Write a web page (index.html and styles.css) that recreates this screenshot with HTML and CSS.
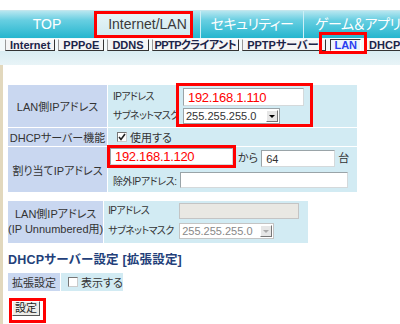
FILE: index.html
```html
<!DOCTYPE html>
<html lang="ja">
<head>
    <meta charset="UTF-8">
    <meta name="viewport" content="width=device-width, initial-scale=1.0">
    <title>LAN設定</title>
    <link rel="stylesheet" href="styles.css">
</head>
<body>
<div class="gap"></div>
<ul class="tabs">
    <li class="tab t-top">TOP</li>
    <li class="tab cur">Internet/LAN</li>
    <li class="tab t-sec">セキュリティー</li>
    <li class="tab t-game">ゲーム＆アプリ</li>
</ul>
<div class="subtabs">
    <span class="sb">Internet</span>
    <span class="sb">PPPoE</span>
    <span class="sb">DDNS</span>
    <span class="sb sb-cl">PPTPクライアント</span>
    <span class="sb sb-sv">PPTPサーバー</span>
    <span class="sb on">LAN</span>
    <span class="sb">DHCP</span>
</div>
<div class="band"></div>
<div class="main">
    <table class="ftab t1">
        <tr class="r1">
            <th>LAN側IPアドレス</th>
            <td>
                <div class="pair">
                    <div class="lbls">
                        <span class="l-ip">IPアドレス</span>
                        <span class="l-mask">サブネットマスク</span>
                    </div>
                    <div class="mark mk1">
                        <input class="fld red ip1" type="text" value="192.168.1.110">
                        <div class="sel s1"><span>255.255.255.0</span><i class="arr"></i></div>
                    </div>
                </div>
            </td>
        </tr>
        <tr class="r2">
            <th>DHCPサーバー機能</th>
            <td>
                <label class="chk"><span class="cb"><svg width="8" height="8" viewBox="0 0 8 8"><polyline points="1,4 3,6.5 7,1" fill="none" stroke="#222" stroke-width="1.6"/></svg></span>使用する</label>
            </td>
        </tr>
        <tr class="r3">
            <th>割り当てIPアドレス</th>
            <td>
                <div class="range">
                    <div class="mark mk2">
                        <input class="fld red ip2" type="text" value="192.168.1.120">
                    </div>
                    <span class="unit">から</span>
                    <input class="fld cnt" type="text" value="64">
                    <span class="unit dai">台</span>
                </div>
                <div class="excl">
                    <span class="l-ex">除外IPアドレス:</span>
                    <input class="fld ex" type="text" value="">
                </div>
            </td>
        </tr>
    </table>

    <table class="ftab t2">
        <tr>
            <th>LAN側IPアドレス<br>(IP Unnumbered用)</th>
            <td>
                <div class="pair">
                    <div class="lbls lbls2">
                        <span>IPアドレス</span>
                        <span>サブネットマスク</span>
                    </div>
                    <div class="col">
                        <input class="fld off ip3" type="text" value="" disabled>
                        <div class="sel s2 dis"><span>255.255.255.0</span><i class="arr"></i></div>
                    </div>
                </div>
            </td>
        </tr>
    </table>

    <h2 class="sect">DHCPサーバー設定 [拡張設定]</h2>

    <table class="ftab t3">
        <tr>
            <th>拡張設定</th>
            <td><label class="chk"><span class="cb"></span>表示する</label></td>
        </tr>
    </table>

    <div class="mark mk3">
        <button class="btn" type="button">設定</button>
    </div>
</div>
</body>
</html>
```

FILE: styles.css
```css
body {
    margin: 0;
    width: 400px;
    height: 324px;
    overflow: hidden;
    background: #fff;
    font-family: "Liberation Sans", "Noto Sans CJK JP", sans-serif;
    font-size: 11px;
    color: #333;
    font-feature-settings: "palt";
}
.gap {
    height: 10px;
}

/* main tabs */
.tabs {
    list-style: none;
    margin: 0;
    padding: 0;
    display: flex;
    height: 27px;
    border-top: 1px solid #c4e6ed;
    overflow: hidden;
}
.tab {
    flex: none;
    line-height: 27px;
    text-align: center;
    font-size: 14px;
    color: #fff;
    white-space: nowrap;
    background: linear-gradient(#b6e6f0, #66cee1 35%, #25b6ce);
    border-left: 1px solid #cdeff6;
}
.t-top {
    width: 94px;
    border-left: none;
}
.cur {
    width: 105px;
    position: relative;
    color: #3a3a3a;
    background: linear-gradient(#e8f6f9, #d0e9ef) 0 0 / 98px 100% no-repeat,
                linear-gradient(#b6e6f0, #66cee1 35%, #25b6ce);
}
.cur::after {
    content: "";
    position: absolute;
    left: -1px;
    top: 0;
    width: 99px;
    height: 27px;
    box-sizing: border-box;
    border: 3px solid #f00;
}
.t-sec {
    width: 102px;
    letter-spacing: -0.5px;
}
.t-game {
    width: 110px;
    text-align: left;
    padding-left: 11px;
    letter-spacing: -0.5px;
}

/* sub tabs */
.subtabs {
    display: flex;
    gap: 3px;
    height: 13px;
    box-sizing: border-box;
    padding: 1px 0 0 5px;
    background: #f3f9fa;
    white-space: nowrap;
}
.sb {
    flex: none;
    font-size: 11px;
    font-weight: bold;
    line-height: 10px;
    padding: 0 4px;
    color: #1c2448;
    background: #f5f5f5;
    border: 1px solid;
    border-color: #fff #333 #333 #999;
}
.sb-cl {
    padding: 0 2px;
    letter-spacing: -0.6px;
}
.sb-sv {
    padding: 0 7px 0 4px;
}
.sb.on {
    position: relative;
    margin-left: 1px;
    padding: 0 3px;
    color: #2b3cf2;
    background: #eef3fa;
    border-color: #333 #fff #fff #333;
}
.sb.on::after {
    content: "";
    position: absolute;
    left: -12px;
    right: -7px;
    top: -8px;
    bottom: -4px;
    border: 3px solid #f00;
}
.band {
    height: 14px;
    background: linear-gradient(#d9edf2, #e8f4f7);
}

/* content */
.main {
    border-left: 3px solid #e2d8bd;
    padding: 19px 0 0 4px;
    height: 240px;
}
.ftab {
    border-collapse: separate;
    border-spacing: 1px;
}
.ftab th {
    padding: 0;
    font-size: 11px;
    font-weight: normal;
    color: #333;
    white-space: nowrap;
    background: #c9d7f0;
}
.ftab td {
    padding: 0;
    vertical-align: top;
    background: #d2ebf3;
}
.t1 th {
    width: 99px;
}
.t1 td {
    width: 249px;
}
.r1 th, .r1 td {
    height: 42px;
}
.r2 th, .r2 td {
    height: 18px;
}
.r3 th, .r3 td {
    height: 45px;
}
.pair {
    display: flex;
    align-items: flex-start;
}
.lbls {
    flex: none;
    width: 63px;
    min-width: 0;
    padding: 3px 0 0 5px;
    display: flex;
    flex-direction: column;
    white-space: nowrap;
    font-size: 10px;
    letter-spacing: -0.6px;
}
.l-ip {
    line-height: 18px;
}
.l-mask {
    line-height: 16px;
    margin-top: 2px;
}
.mark {
    border: 3px solid #f00;
}
.mk1 {
    flex: none;
    margin-top: -2px;
    padding: 2px 6px 0 4px;
    display: flex;
    flex-direction: column;
    gap: 2px;
}
.fld {
    box-sizing: border-box;
    height: 18px;
    margin: 0;
    padding: 0 4px;
    border: 1px solid;
    border-color: #9aa4a8 #d4d9db #d4d9db #9aa4a8;
    font-family: inherit;
    font-size: 11px;
    color: #333;
    background: #fff;
    outline: none;
}
.fld.red {
    color: #f00;
    font-size: 13px;
    letter-spacing: -0.3px;
}
.ip1 {
    width: 121px;
}
.sel {
    box-sizing: border-box;
    height: 16px;
    display: flex;
    align-items: center;
    justify-content: space-between;
    padding: 0 1px 0 2px;
    border: 1px solid #9aa4a8;
    background: #fff;
    font-size: 11px;
    color: #333;
}
.s1 {
    width: 97px;
}
.arr {
    position: relative;
    width: 12px;
    height: 12px;
    box-sizing: border-box;
    background: #e6e6e6;
    border: 1px solid;
    border-color: #fff #777 #777 #fff;
}
.arr::before {
    content: "";
    position: absolute;
    left: 2px;
    top: 4px;
    border-top: 3px solid #000;
    border-left: 3px solid transparent;
    border-right: 3px solid transparent;
}
.chk {
    display: flex;
    align-items: center;
    gap: 3px;
    height: 18px;
    white-space: nowrap;
}
.r2 .chk {
    padding-left: 9px;
}
.cb {
    width: 10px;
    height: 10px;
    box-sizing: border-box;
    display: flex;
    align-items: center;
    justify-content: center;
    background: #fff;
    border: 1px solid;
    border-color: #777 #ccc #ccc #777;
}
.range {
    display: flex;
    align-items: flex-end;
    margin-top: -2px;
}
.mk2 {
    margin-left: -1px;
    display: flex;
}
.ip2 {
    width: 123px;
    height: 17px;
}
.unit {
    line-height: 17px;
    margin: 0 0 1px 2px;
}
.cnt {
    width: 74px;
    height: 17px;
    margin: 0 0 1px 3px;
}
.dai {
    margin-left: 3px;
}
.excl {
    display: flex;
    align-items: center;
    margin-top: 4px;
    padding-left: 5px;
}
.l-ex {
    flex: none;
    width: 67px;
    white-space: nowrap;
    font-size: 10px;
    letter-spacing: -0.4px;
}
.ex {
    width: 168px;
    height: 16px;
}

/* unnumbered */
.t2 {
    margin-top: 7px;
}
.t2 th {
    width: 94px;
    height: 42px;
    line-height: 15px;
}
.t2 td {
    width: 204px;
}
.lbls2 {
    width: 71px;
    padding: 2px 0 0 4px;
    gap: 4px;
}
.lbls2 span {
    line-height: 16px;
}
.col {
    padding-top: 2px;
    display: flex;
    flex-direction: column;
    gap: 4px;
}
.fld.off {
    width: 120px;
    height: 16px;
    background: #e9e8e3;
    border-color: #c4c4c4;
}
.s2 {
    width: 95px;
}
.sel.dis {
    color: #888;
    border-color: #c4c4c4;
}
.sel.dis .arr::before {
    border-top-color: #aaa;
}

/* extended */
.sect {
    margin: 8px 0 0 1px;
    font-size: 12.5px;
    line-height: 16px;
    font-weight: bold;
    letter-spacing: 0.2px;
    color: #233f7a;
}
.t3 {
    margin-top: 4px;
}
.t3 th {
    width: 52px;
    height: 18px;
}
.t3 td {
    width: 56px;
    vertical-align: middle;
}
.t3 .chk {
    padding-left: 7px;
}
.mk3 {
    display: inline-block;
    margin: 6px 0 0 2px;
    padding: 0 3px 4px 0;
}
.btn {
    display: block;
    width: 28px;
    height: 15px;
    padding: 0;
    font-family: inherit;
    font-size: 11px;
    line-height: 13px;
    color: #222;
    background: #ecece8;
    border: 1px solid;
    border-color: #fff #555 #555 #fff;
}
```
